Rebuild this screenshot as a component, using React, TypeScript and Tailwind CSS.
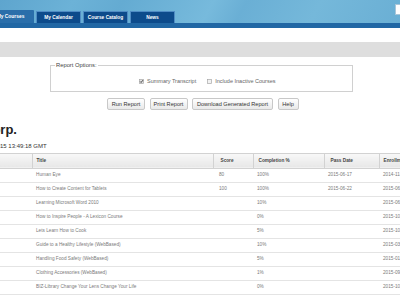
import React from "react";

const rows = [
  { t: "Human Eye", s: "80", c: "100%", p: "2015-06-17", e: "2014-11-05" },
  { t: "How to Create Content for Tablets", s: "100", c: "100%", p: "2015-06-22", e: "2015-06-22" },
  { t: "Learning Microsoft Word 2010", s: "", c: "10%", p: "", e: "2015-06-24" },
  { t: "How to Inspire People - A Lexicon Course", s: "", c: "0%", p: "", e: "2015-10-12" },
  { t: "Lets Learn How to Cook", s: "", c: "5%", p: "", e: "2015-10-12" },
  { t: "Guide to a Healthy Lifestyle (WebBased)", s: "", c: "10%", p: "", e: "2015-03-02" },
  { t: "Handling Food Safety (WebBased)", s: "", c: "5%", p: "", e: "2015-01-20" },
  { t: "Clothing Accessories (WebBased)", s: "", c: "1%", p: "", e: "2015-09-14" },
  { t: "BIZ-Library Change Your Lens Change Your Life", s: "", c: "0%", p: "", e: "2015-10-12" },
];

function Check({ checked }: { checked?: boolean }) {
  return (
    <svg width="5" height="5" viewBox="0 0 5 5" className="shrink-0">
      <rect x="0.5" y="0.5" width="4" height="4" fill={checked ? "#e6e6e6" : "#f2f2f2"} stroke="#a8a8a8" strokeWidth="0.7" />
      {checked && <path d="M1.2 2.5 L2.1 3.5 L3.9 1.2" fill="none" stroke="#333" strokeWidth="0.9" />}
    </svg>
  );
}

export default function App() {
  const btn =
    "h-[11.5px] flex items-center justify-center rounded-[2px] border border-[#c8c8c8] bg-[linear-gradient(#ffffff,#e9e9e9)] text-[5.6px] text-[#333]";
  const th =
    "h-[15px] text-left align-middle font-bold text-[4.7px] text-[#444] border-t border-b border-r border-[#d2d2d2] bg-[linear-gradient(#f8f8f8,#e7e7e7)]";
  const td = "h-[14px] align-middle text-[4.7px] text-[#7a7a7a] border-b border-[#e4e4e4] whitespace-nowrap overflow-hidden";
  return (
    <div className="w-[400px] h-[300px] overflow-hidden bg-white font-['Liberation_Sans',Arial,sans-serif]">
      <div className="h-[23px] flex items-end bg-[linear-gradient(118deg,#5ea5ce_0%,#6cb2d7_18%,#64abd2_30%,#77badc_52%,#6aafd5_60%,#75b8da_78%,#6aafd4_100%)]">
        <div className="flex items-end gap-[2px] ml-[-13px]">
          <div className="w-[47px] h-[13px] bg-[#2a6eaa] text-white font-bold text-[4.9px] flex items-center justify-center rounded-t-[1px]">
            My Courses
          </div>
          {["My Calendar", "Course Catalog", "News"].map((n) => (
            <div
              key={n}
              className="w-[45px] h-[12px] mb-[0px] bg-[#0d4b8b] border border-[#4f8cc4] border-b-0 text-white font-bold text-[4.8px] flex items-center justify-center"
            >
              {n}
            </div>
          ))}
        </div>
        <div className="ml-auto self-start mt-[4px] w-[5px] h-[11px] bg-white border border-[#a9c6d8] border-r-0" />
      </div>
      <div className="h-[5px] bg-[#2167a4]" />
      <div className="h-[14px] bg-white" />
      <div className="h-[15px] bg-[#dedede]" />

      <fieldset className="ml-[50px] mt-[5px] w-[303px] h-[30px] border border-[#d0d0d0] px-0">
        <legend className="ml-[4px] px-[1px] text-[5.8px] leading-[6px] text-[#444]">Report Options:</legend>
        <div className="flex items-center pl-[88px] pt-[9px] text-[5.5px] text-[#666]">
          <Check checked />
          <span className="ml-[3px]">Summary Transcript</span>
          <span className="ml-[11px]">
            <Check />
          </span>
          <span className="ml-[3px]">Include Inactive Courses</span>
        </div>
      </fieldset>

      <div className="flex gap-[4.5px] pl-[107px] mt-[6px]">
        <div className={`${btn} w-[38px]`}>Run Report</div>
        <div className={`${btn} w-[38px]`}>Print Report</div>
        <div className={`${btn} w-[81px]`}>Download Generated Report</div>
        <div className={`${btn} w-[21px]`}>Help</div>
      </div>

      <div className="mt-[12px] ml-[-17px] text-[13px] leading-[15px] font-bold text-[#222] whitespace-nowrap">Corp.</div>
      <div className="mt-[6px] ml-[-6.7px] text-[6px] leading-[7px] text-[#333] whitespace-nowrap">2015 13:49:18 GMT</div>

      <table className="mt-[3px] table-fixed border-collapse w-[440px]">
        <colgroup>
          <col className="w-[32px]" />
          <col className="w-[181px]" />
          <col className="w-[40px]" />
          <col className="w-[71px]" />
          <col className="w-[55px]" />
          <col className="w-[61px]" />
        </colgroup>
        <thead>
          <tr>
            <th className={th}></th>
            <th className={`${th} pl-[4px]`}>Title</th>
            <th className={`${th} pl-[7px]`}>Score</th>
            <th className={`${th} pl-[5px]`}>Completion %</th>
            <th className={`${th} pl-[6px]`}>Pass Date</th>
            <th className={`${th} pl-[4px]`}>Enrollment Date</th>
          </tr>
        </thead>
        <tbody>
          {rows.map((r) => (
            <tr key={r.t}>
              <td className={td}></td>
              <td className={`${td} pl-[4px]`}>{r.t}</td>
              <td className={`${td} pl-[6px]`}>{r.s}</td>
              <td className={`${td} pl-[4px]`}>{r.c}</td>
              <td className={`${td} pl-[4px]`}>{r.p}</td>
              <td className={`${td} pl-[4px]`}>{r.e}</td>
            </tr>
          ))}
        </tbody>
      </table>
    </div>
  );
}
